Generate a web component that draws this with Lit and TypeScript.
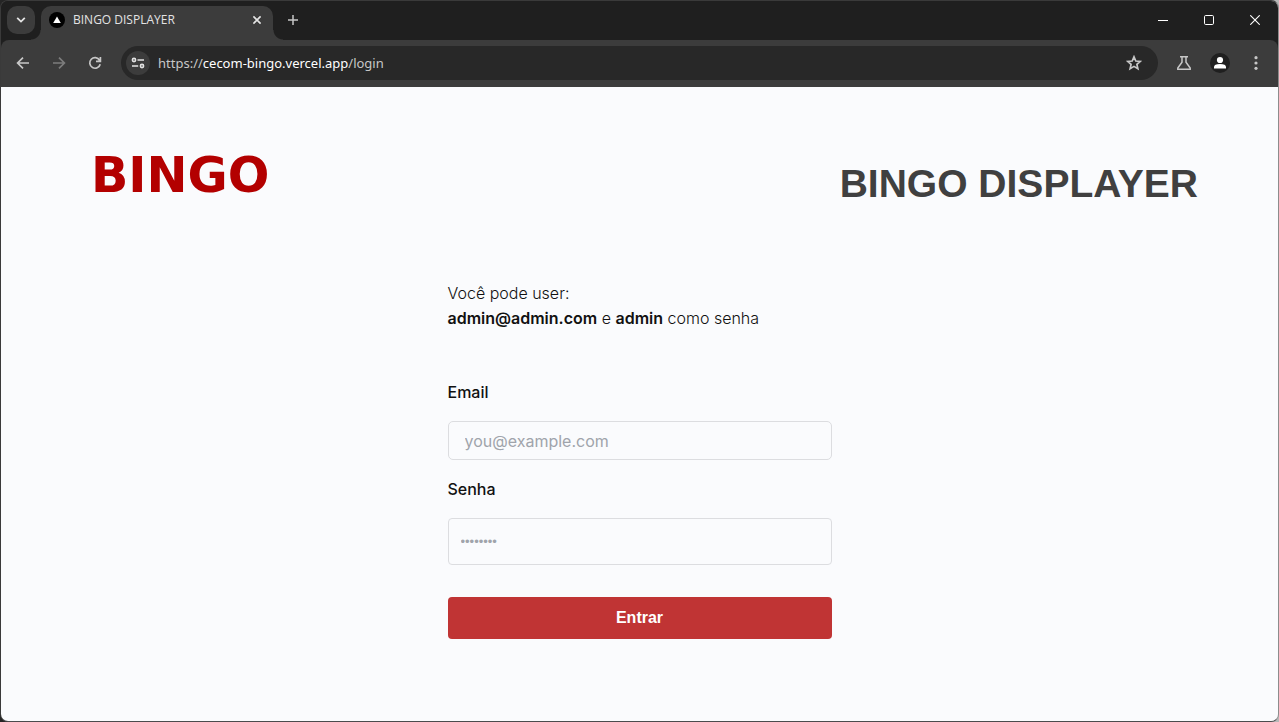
import { LitElement, html, css } from "lit";
import { customElement } from "lit/decorators.js";

@customElement("browser-chrome")
class BrowserChrome extends LitElement {
  static styles = css`
    :host {
      display: block;
      font-family: "Noto Sans", "Open Sans", sans-serif;
      background: #1f1f1f;
      color: #e3e3e3;
    }
    * {
      box-sizing: border-box;
    }
    button {
      display: grid;
      place-items: center;
      padding: 0;
      border: 0;
      background: none;
      color: #c7c7c7;
    }
    svg {
      display: block;
    }
    .strip {
      display: flex;
      align-items: flex-start;
      padding: 5px 0 0 6px;
    }
    .search {
      width: 28px;
      height: 28px;
      border-radius: 10px;
      background: #3c3c3c;
      color: #e3e3e3;
    }
    .tab {
      position: relative;
      display: flex;
      align-items: center;
      width: 232px;
      height: 34px;
      margin-left: 6px;
      padding: 0 8px 6px;
      border-radius: 10px 10px 0 0;
      background: #3c3c3c;
    }
    .tab::before,
    .tab::after {
      content: "";
      position: absolute;
      bottom: 0;
      width: 10px;
      height: 10px;
    }
    .tab::before {
      right: 100%;
      background: radial-gradient(circle at 0 0, transparent 9px, #3c3c3c 10px);
    }
    .tab::after {
      left: 100%;
      background: radial-gradient(circle at 100% 0, transparent 9px, #3c3c3c 10px);
    }
    .title {
      flex: 1;
      margin-left: 8px;
      font-family: "Open Sans", "Noto Sans", sans-serif;
      font-size: 12px;
      line-height: 16px;
      white-space: nowrap;
    }
    .close {
      width: 16px;
      height: 16px;
      color: #e3e3e3;
    }
    .add {
      width: 28px;
      height: 28px;
      margin-left: 6px;
    }
    .controls {
      display: flex;
      margin-left: auto;
    }
    .controls button {
      width: 46px;
      height: 28px;
      color: #fff;
    }
    .bar {
      display: flex;
      align-items: center;
      height: 47px;
      padding: 0 4px 1px;
      border-radius: 8px 8px 0 0;
      background: #3c3c3c;
    }
    .bar > button {
      width: 36px;
      height: 36px;
    }
    .bar > .forward {
      color: #7c7c7c;
    }
    .address {
      display: flex;
      flex: 1;
      align-items: center;
      height: 34px;
      margin: 0 8px;
      padding: 0 16px 0 5px;
      border-radius: 17px;
      background: #282828;
    }
    .site {
      width: 24px;
      height: 24px;
      border-radius: 50%;
      background: #3c3c3c;
      color: #e3e3e3;
    }
    .url {
      flex: 1;
      margin-left: 8px;
      font-size: 13px;
      line-height: 20px;
      color: #c7c7c7;
    }
    .host {
      color: #fff;
    }
  `;

  render() {
    return html`
      <div class="strip">
        <button class="search" aria-label="Search tabs">
          <svg width="10" height="8" viewBox="0 0 10 8" fill="none" stroke="currentColor" stroke-width="1.8"><path d="M1.2 1.8 5 5.6l3.8-3.8" /></svg>
        </button>
        <div class="tab">
          <svg width="16" height="16" viewBox="0 0 16 16"><circle cx="8" cy="8" r="8" fill="#000" /><path d="M8 4.4 11.8 11H4.2z" fill="#fff" /></svg>
          <span class="title">BINGO DISPLAYER</span>
          <button class="close" aria-label="Close tab">
            <svg width="10" height="10" viewBox="0 0 10 10" stroke="currentColor" stroke-width="1.6"><path d="m1.4 1.4 7.2 7.2m0-7.2L1.4 8.6" /></svg>
          </button>
        </div>
        <button class="add" aria-label="New tab">
          <svg width="12" height="12" viewBox="0 0 12 12" stroke="currentColor" stroke-width="1.5"><path d="M6 1v10M1 6h10" /></svg>
        </button>
        <div class="controls">
          <button aria-label="Minimize"><svg width="10" height="10" viewBox="0 0 10 10" stroke="currentColor"><path d="M0 5.5h10" /></svg></button>
          <button aria-label="Maximize"><svg width="10" height="10" viewBox="0 0 10 10" fill="none" stroke="currentColor"><rect x=".5" y=".5" width="9" height="9" rx="1.2" /></svg></button>
          <button aria-label="Close"><svg width="10" height="10" viewBox="0 0 10 10" stroke="currentColor" stroke-width="1.1"><path d="m.3.3 9.4 9.4m0-9.4L.3 9.7" /></svg></button>
        </div>
      </div>
      <div class="bar">
        <button aria-label="Back"><svg width="16" height="16" viewBox="0 0 16 16" fill="none" stroke="currentColor" stroke-width="1.7"><path d="M14 8H3M8 2.6 2.6 8 8 13.4" /></svg></button>
        <button class="forward" aria-label="Forward"><svg width="16" height="16" viewBox="0 0 16 16" fill="none" stroke="currentColor" stroke-width="1.7"><path d="M2 8h11M8 2.6 13.4 8 8 13.4" /></svg></button>
        <button aria-label="Reload"><svg width="16" height="16" viewBox="0 0 16 16" fill="none" stroke="currentColor" stroke-width="1.7"><path d="M13.2 9.2A5.3 5.3 0 1 1 12.6 5.2M13.4 2v4.4H9" /></svg></button>
        <div class="address">
          <button class="site" aria-label="Site information">
            <svg width="14" height="12" viewBox="0 0 14 12" fill="none" stroke="currentColor" stroke-width="1.6"><circle cx="3" cy="3" r="1.6" /><path d="M6.5 3H13M1 9h6.2" /><circle cx="11" cy="9" r="1.6" /></svg>
          </button>
          <span class="url">https://<span class="host">cecom-bingo.vercel.app</span>/login</span>
          <button class="star" aria-label="Bookmark">
            <svg width="16" height="16" viewBox="0 0 16 16" fill="none" stroke="currentColor" stroke-width="1.7"><path d="m8 1.8 1.8 4.2 4.5.4-3.4 3 1 4.4L8 11.4l-3.900 2.400 1-4.400-3.400-3 4.500-.4z" /></svg>
          </button>
        </div>
        <button aria-label="Labs"><svg width="16" height="16" viewBox="0 0 16 16" fill="none" stroke="currentColor" stroke-width="1.5"><path d="M4 1.700h8M6 1.700v5.600L1.800 13v1.300h12.400V13L10 7.300V1.700" /></svg></button>
        <button aria-label="Profile"><svg width="20" height="20" viewBox="0 0 20 20"><circle cx="10" cy="10" r="10" fill="#1f1f1f" /><circle cx="10" cy="7" r="3.100" fill="#fff" /><path d="M4 15.500V14q0-3 6-3t6 3v1.500z" fill="#fff" /></svg></button>
        <button aria-label="Menu"><svg width="4" height="16" viewBox="0 0 4 16" fill="currentColor"><circle cx="2" cy="2.700" r="1.600" /><circle cx="2" cy="8" r="1.600" /><circle cx="2" cy="13.300" r="1.600" /></svg></button>
      </div>
    `;
  }
}

@customElement("login-page")
class LoginPage extends LitElement {
  static styles = css`
    :host {
      display: block;
      padding: 56px 80px 80px;
      background: #fafbfd;
      color: #111;
      font-family: Inter, "Liberation Sans", sans-serif;
      font-size: 16px;
    }
    * {
      box-sizing: border-box;
    }
    header {
      display: flex;
      justify-content: space-between;
      align-items: flex-start;
    }
    .logo {
      margin-left: 10px;
      font: bold 49px/66px "DejaVu Sans", sans-serif;
      color: #b30000;
    }
    h1 {
      margin: 16px 0 0;
      font: bold 39px/50px "Liberation Sans", Arial, sans-serif;
      color: #404040;
    }
    form {
      display: flex;
      flex-direction: column;
      width: 384px;
      max-width: 100%;
      margin: 72px auto 0;
    }
    .hint {
      margin: 0 0 48px;
      font-weight: 300;
      line-height: 25px;
    }
    .hint b {
      font-weight: 600;
    }
    label {
      font-weight: 500;
      line-height: 26px;
    }
    input {
      width: 100%;
      margin: 16px 0;
      border: 1px solid #dcdde0;
      border-radius: 5px;
      background: transparent;
      font: 400 16px/24px Inter, "Liberation Sans", sans-serif;
      color: #111;
    }
    input::placeholder {
      color: #a0a4ab;
      opacity: 1;
    }
    .email {
      height: 39px;
      padding: 0 16px;
    }
    .password {
      height: 47px;
      margin-bottom: 32px;
      padding: 0 12px;
      border-radius: 4px;
      font: 13px/24px "Liberation Sans", sans-serif;
    }
    .submit {
      height: 42px;
      border: 0;
      border-radius: 4px;
      background: #c03434;
      color: #fff;
      font: bold 16px/24px "Liberation Sans", Arial, sans-serif;
    }
  `;

  render() {
    return html`
      <header>
        <div class="logo">BINGO</div>
        <h1>BINGO DISPLAYER</h1>
      </header>
      <form>
        <p class="hint">Você pode user:<br /><b>admin@admin.com</b> e <b>admin</b> como senha</p>
        <label for="email">Email</label>
        <input class="email" id="email" type="email" placeholder="you@example.com" />
        <label for="password">Senha</label>
        <input class="password" id="password" type="password" placeholder="••••••••" />
        <button class="submit" type="button">Entrar</button>
      </form>
    `;
  }
}

@customElement("app-root")
class AppRoot extends LitElement {
  static styles = css`
    :host {
      display: flex;
      min-height: 100vh;
      box-sizing: border-box;
      background: linear-gradient(90deg, #252525 50%, #b8b8b8 50%);
    }
    .window {
      display: flex;
      flex: 1;
      flex-direction: column;
      overflow: hidden;
      border: 1px solid #3a3a3a;
      border-right-color: #8c8c8c;
      border-bottom-color: #4a4b4d;
      border-radius: 8px;
    }
    .page {
      flex: 1;
    }
  `;

  render() {
    return html`
      <div class="window">
        <browser-chrome></browser-chrome>
        <login-page class="page"></login-page>
      </div>
    `;
  }
}
